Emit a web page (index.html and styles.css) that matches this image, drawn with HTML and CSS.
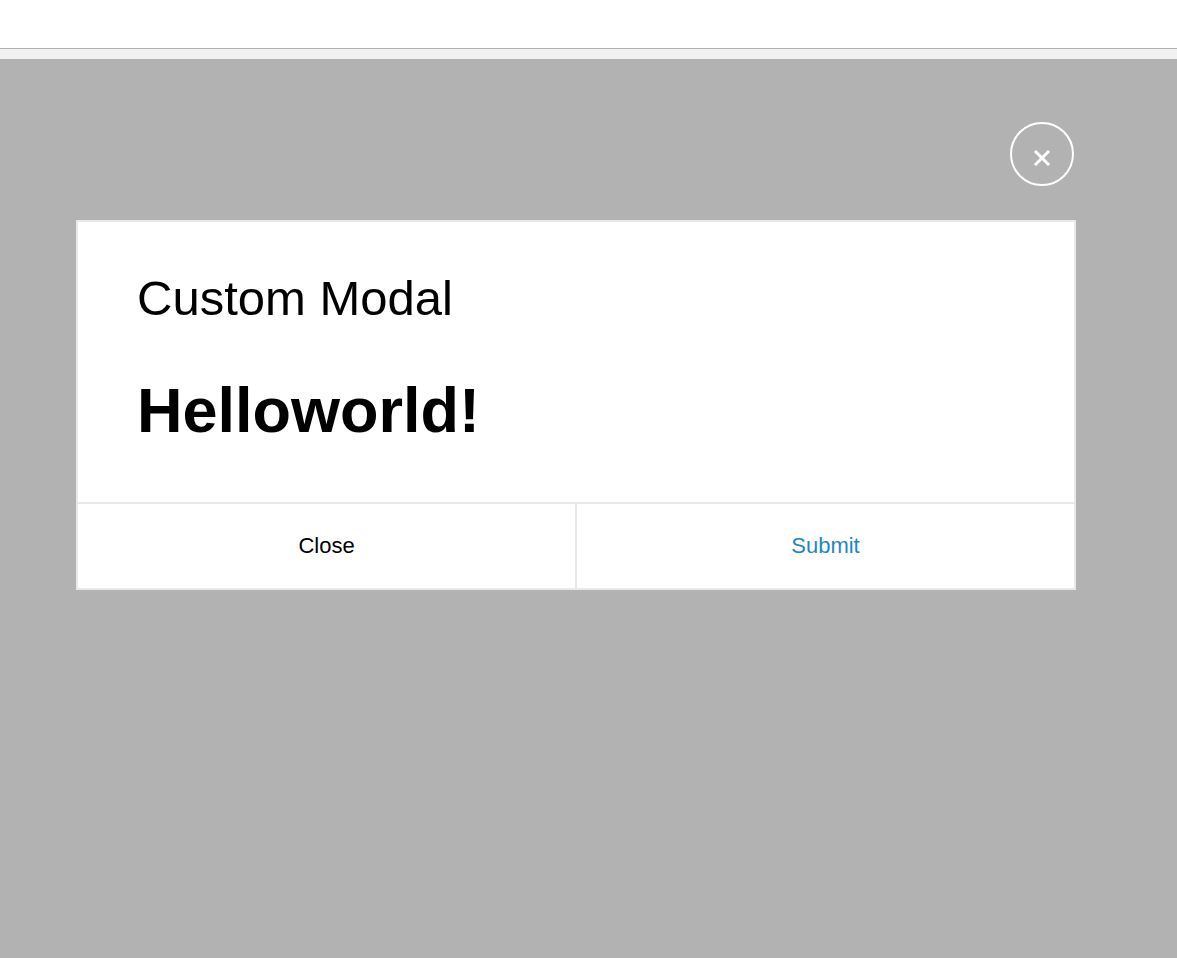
FILE: index.html
```html
<!DOCTYPE html>
<html>
<head>
<meta charset="utf-8">
<link rel="stylesheet" href="styles.css">
</head>
<body>
<div class="topbar"></div>
<div class="strip"></div>
<div class="overlay">
  <div class="close-row">
    <button class="close-circle" aria-label="Close">
      <svg width="18" height="18" viewBox="0 0 18 18"><path d="M2 2 L16 16 M16 2 L2 16" stroke="#fff" stroke-width="3" stroke-linecap="butt"/></svg>
    </button>
  </div>
  <div class="modal">
    <div class="modal-body">
      <div class="modal-title">Custom Modal</div>
      <h1 class="modal-heading">Helloworld!</h1>
    </div>
    <div class="modal-footer">
      <div class="btn btn-close">Close</div>
      <div class="btn btn-submit">Submit</div>
    </div>
  </div>
</div>
</body>
</html>
```

FILE: styles.css
```css
html, body {
  margin: 0;
  padding: 0;
  height: 100%;
}
body {
  font-family: "Liberation Sans", Arial, Helvetica, sans-serif;
  background: #b2b2b2;
  display: flex;
  flex-direction: column;
  overflow: hidden;
}
.topbar {
  height: 48px;
  background: #ffffff;
  border-bottom: 1px solid #b0b0b0;
  flex: none;
}
.strip {
  height: 10px;
  background: #f1f1f1;
  flex: none;
}
.overlay {
  flex: 1;
  background: #b2b2b2;
  padding: 63px 101px 0 76px;
}
.close-row {
  display: flex;
  justify-content: flex-end;
  padding-right: 2px;
  height: 98px;
}
.close-circle {
  width: 64px;
  height: 64px;
  border-radius: 50%;
  border: 2px solid #ffffff;
  background: transparent;
  padding: 0;
  margin: 0;
  box-sizing: border-box;
  display: flex;
  align-items: center;
  justify-content: center;
}
.close-circle svg {
  display: block;
  width: 18px;
  height: 18px;
  margin-top: 8px;
}
.modal {
  width: 1000px;
  box-sizing: border-box;
  border: 2px solid #e8e8e8;
  background: #ffffff;
}
.modal-body {
  padding: 52px 59px 60px;
}
.modal-title {
  font-size: 49px;
  line-height: 48px;
  color: #000;
  margin-bottom: 56px;
}
.modal-heading {
  margin: 0;
  font-size: 63px;
  line-height: 64px;
  font-weight: bold;
  color: #000;
}
.modal-footer {
  display: flex;
  border-top: 2px solid #e8e8e8;
  height: 84px;
}
.btn {
  flex: 1;
  display: flex;
  align-items: center;
  justify-content: center;
  font-size: 22px;
}
.btn-close {
  color: #000;
  border-right: 2px solid #e8e8e8;
}
.btn-submit {
  color: #1d87c5;
}
```
